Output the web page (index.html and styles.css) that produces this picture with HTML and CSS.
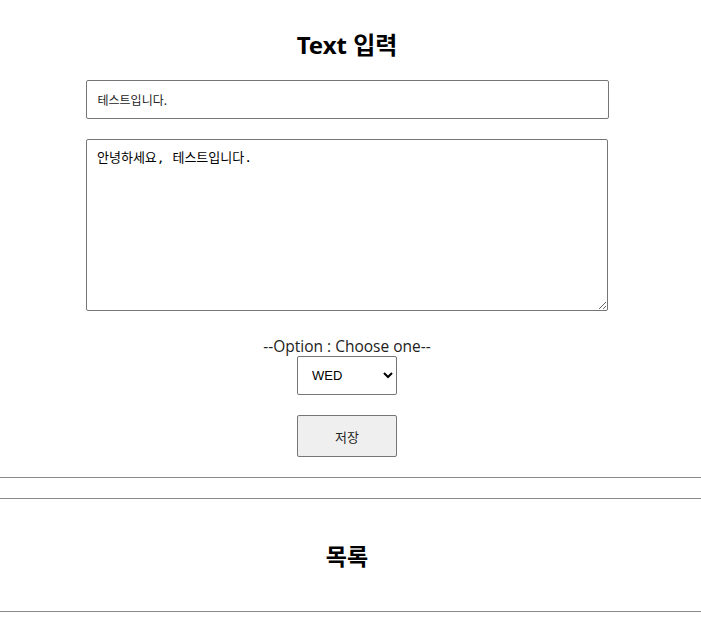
FILE: index.html
```html
<!DOCTYPE html>
<html lang="ko">
<head>
<meta charset="utf-8">
<link rel="stylesheet" href="styles.css">
</head>
<body>
<section class="form">
  <h2 class="title">Text 입력</h2>
  <input class="text-input" type="text" value="테스트입니다.">
  <textarea class="text-area">안녕하세요, 테스트입니다.</textarea>
  <label class="opt-label">--Option : Choose one--</label>
  <div class="select-wrap"><select class="select"><option>WED</option></select></div>
  <button class="save">저장</button>
</section>
<div class="rule"></div>
<section class="list">
  <h2 class="list-title">목록</h2>
</section>
<div class="rule rule-bottom"></div>
</body>
</html>
```
FILE: styles.css
```css
html, body {
  margin: 0;
  padding: 0;
  background: #fff;
  font-family: "Open Sans", "Noto Sans", "Noto Sans CJK KR", sans-serif;
  color: #000;
}
.form {
  width: 694px;
  display: flex;
  flex-direction: column;
  align-items: center;
  padding-top: 30px;
}
.title {
  margin: 0;
  font-size: 24px;
  line-height: 30px;
  font-weight: 700;
  font-family: "Noto Sans", "Noto Sans CJK KR", sans-serif;
}
.text-input {
  box-sizing: border-box;
  width: 523px;
  height: 39px;
  margin-top: 20px;
  padding: 0 11px;
  border: 1px solid #767676;
  border-radius: 2px;
  font-family: "Noto Sans CJK KR", sans-serif;
  font-size: 12px;
  color: #222;
}
.text-area {
  box-sizing: border-box;
  width: 522px;
  height: 172px;
  margin-top: 20px;
  padding: 9px 10px;
  border: 1px solid #767676;
  border-radius: 2px;
  font-family: "DejaVu Sans Mono", "Noto Sans CJK KR", monospace;
  font-size: 13px;
  line-height: 17px;
  resize: both;
}
.opt-label {
  margin-top: 25px;
  font-size: 15.5px;
  line-height: 20px;
  color: #222;
}
.select-wrap {
  display: flex;
}
.select {
  box-sizing: border-box;
  width: 100px;
  height: 39px;
  padding: 0 8px 0 10px;
  border: 1px solid #767676;
  border-radius: 2px;
  background: #fff;
  font-family: "Liberation Sans", sans-serif;
  font-size: 13px;
  color: #000;
}
.save {
  box-sizing: border-box;
  width: 100px;
  height: 42px;
  margin-top: 20px;
  border: 1px solid #767676;
  border-radius: 2px;
  background: #efefef;
  font-family: "Noto Sans CJK KR", sans-serif;
  font-size: 13px;
  color: #222;
}
.rule {
  border-top: 1px solid #8a8a8a;
  margin-top: 20px;
}
.list {
  border-top: 1px solid #8a8a8a;
  margin-top: 20px;
  display: flex;
  justify-content: center;
  padding: 40px 7px 0 0;
  height: 72px;
}
.list-title {
  margin: 0;
  font-size: 23px;
  line-height: 32px;
  font-weight: 700;
  font-family: "Noto Sans CJK KR", sans-serif;
}
.rule-bottom {
  margin-top: 0;
}
```
